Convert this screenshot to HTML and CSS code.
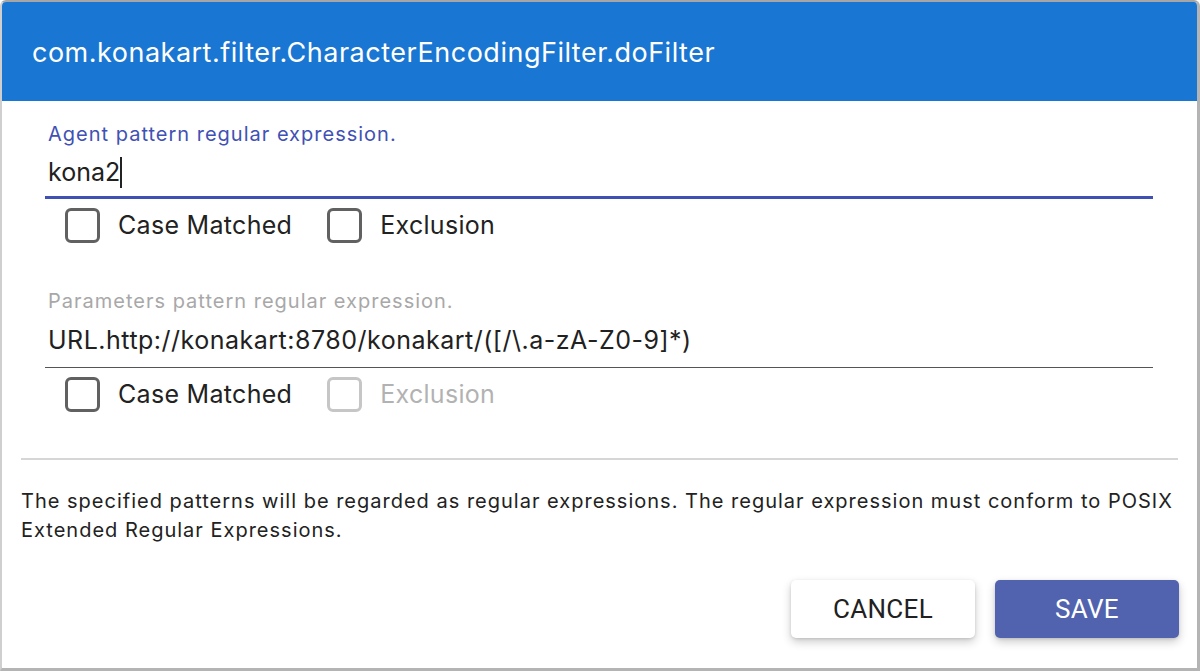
FILE: index.html
```html
<!DOCTYPE html>
<html>
<head>
<meta charset="utf-8">
<link rel="stylesheet" href="styles.css">
</head>
<body>
<div class="dialog">
  <div class="header"><h1 class="title">com.konakart.filter.CharacterEncodingFilter.doFilter</h1></div>
  <div class="content">
    <div class="field first">
      <label class="field-label focused">Agent pattern regular expression.</label>
      <div class="field-input focused-line"><span>kona2</span><span class="caret"></span></div>
    </div>
    <div class="checks first-checks">
      <label class="check"><span class="box"></span><span class="check-text">Case Matched</span></label>
      <label class="check"><span class="box"></span><span class="check-text">Exclusion</span></label>
    </div>
    <div class="field second">
      <label class="field-label muted">Parameters pattern regular expression.</label>
      <div class="field-input plain-line"><span>URL.http://konakart:8780/konakart/([/\.a-zA-Z0-9]*)</span></div>
    </div>
    <div class="checks second-checks">
      <label class="check"><span class="box"></span><span class="check-text">Case Matched</span></label>
      <label class="check disabled"><span class="box"></span><span class="check-text">Exclusion</span></label>
    </div>
  </div>
  <div class="divider"></div>
  <p class="note">The specified patterns will be regarded as regular expressions. The regular expression must conform to POSIX Extended Regular Expressions.</p>
  <div class="actions">
    <button class="btn btn-cancel">CANCEL</button>
    <button class="btn btn-save">SAVE</button>
  </div>
</div>
</body>
</html>
```
FILE: styles.css
```css
html, body {
  margin: 0;
  padding: 0;
  background: #ffffff;
}
body {
  font-family: Inter, Roboto, "Liberation Sans", sans-serif;
  color: #212121;
}
.dialog {
  box-sizing: border-box;
  width: 1200px;
  height: 671px;
  border-top: 2px solid #a6a6a6;
  border-left: 2px solid #cfcfcf;
  border-right: 3px solid #b4b4b4;
  border-bottom: 3px solid #b4b4b4;
  border-radius: 6px 6px 0 0;
  overflow: hidden;
  display: flex;
  flex-direction: column;
  background: #fff;
}
.header {
  background: #1976d2;
  height: 99px;
  display: flex;
  align-items: center;
  padding-left: 30px;
  flex: none;
}
.title {
  margin: 0;
  font-weight: 400;
  font-size: 27px;
  letter-spacing: 0.5px;
  color: #fff;
  padding-top: 2px;
}
.content {
  padding: 0 44px 0 43px;
}
.field.first { padding-top: 21px; }
.field.second { padding-top: 46px; }
.field-label {
  display: block;
  font-size: 20px;
  letter-spacing: 1px;
  line-height: 24px;
  padding-left: 3px;
}
.field-label.focused { color: #3f51b5; }
.field-label.muted { color: #a8a8a8; }
.field-input {
  font-size: 25px;
  letter-spacing: 0.5px;
  line-height: 32px;
  display: flex;
  align-items: center;
  padding-left: 3px;
  color: #212121;
}
.focused-line {
  padding-top: 10px;
  padding-bottom: 8px;
  border-bottom: 3px solid #3f51b5;
}
.focused-line span:first-child { letter-spacing: 0; }
.plain-line {
  padding-top: 11px;
  padding-bottom: 11px;
  border-bottom: 1px solid #555;
}
.caret {
  display: inline-block;
  width: 1.5px;
  height: 31px;
  background: #222;
  margin-left: 0;
}
.checks {
  display: flex;
  gap: 35px;
  padding-left: 20px;
}
.first-checks { padding-top: 9px; }
.second-checks { padding-top: 9px; }
.check {
  display: flex;
  align-items: center;
  gap: 18px;
  font-size: 25px;
  letter-spacing: 0.3px;
  line-height: 35px;
  color: #222;
}
.box {
  box-sizing: border-box;
  width: 35px;
  height: 35px;
  border: 3.5px solid #616161;
  border-radius: 6px;
}
.check.disabled .box { border-color: #c6c6c6; }
.check.disabled .check-text { color: #b2b2b2; }
.divider {
  height: 2px;
  background: #d6d6d6;
  margin: 46px 19px 0 19px;
  flex: none;
}
.note {
  margin: 27px 19px 0 19px;
  font-size: 20px;
  letter-spacing: 1px;
  line-height: 29px;
  color: #222;
}
.actions {
  display: flex;
  justify-content: flex-end;
  gap: 20px;
  padding: 35px 18px 0 0;
}
.btn {
  width: 184px;
  height: 58px;
  border: none;
  border-radius: 5px;
  font-family: Roboto, Inter, "Liberation Sans", sans-serif;
  font-size: 26px;
  letter-spacing: 0.3px;
  box-shadow: 0 4px 10px rgba(0,0,0,0.2), 0 1px 3px rgba(0,0,0,0.12);
}
.btn-cancel { background: #fff; color: #212121; }
.btn-save { background: #5163ae; color: #fff; }
```
